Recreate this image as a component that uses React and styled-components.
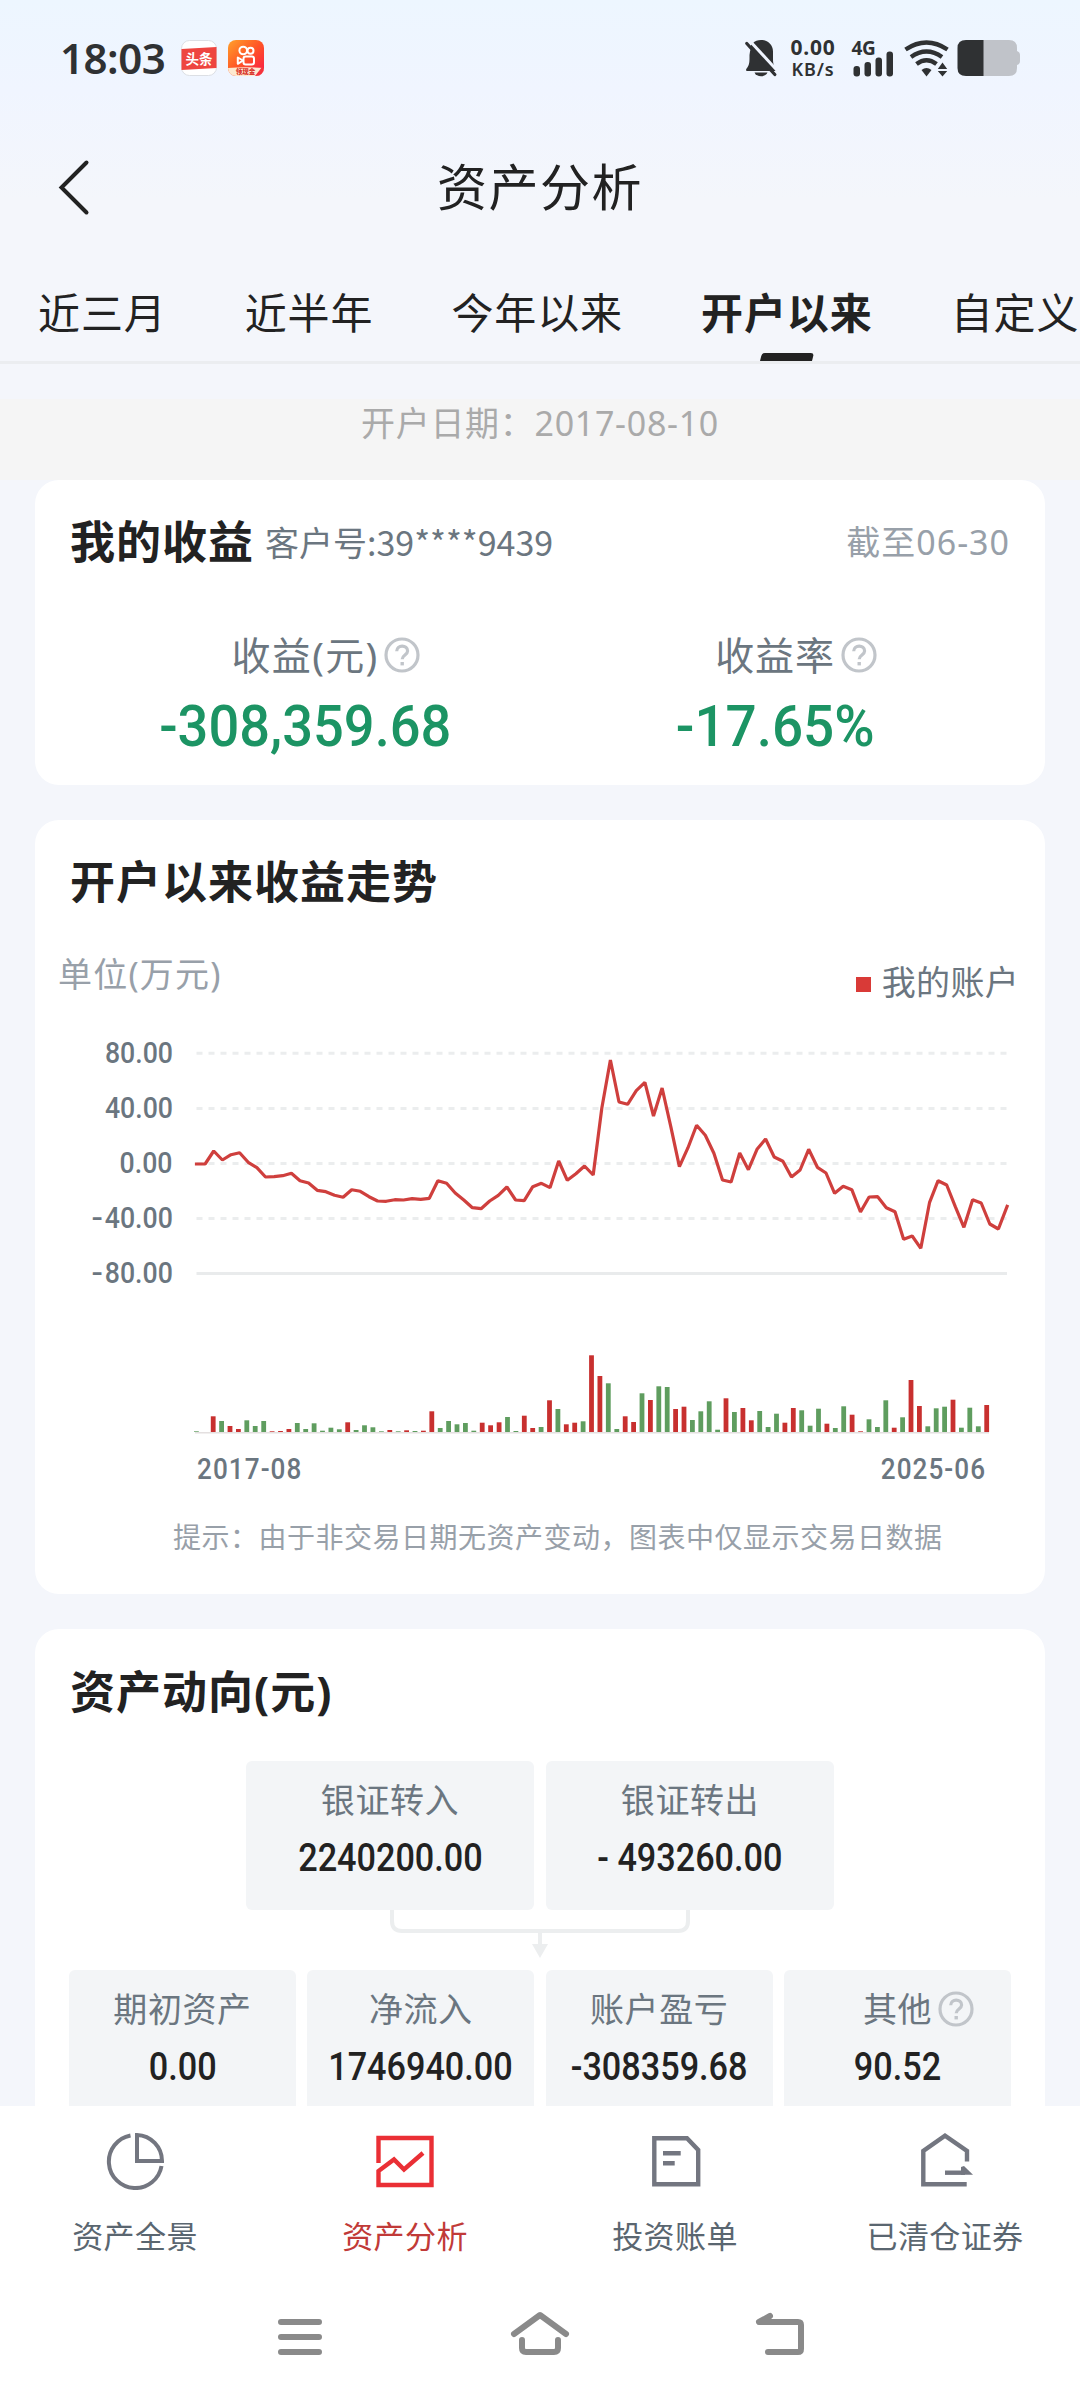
import React from 'react';
import styled, { createGlobalStyle } from 'styled-components';

const GlobalStyle = createGlobalStyle`
  * {
    box-sizing: border-box;
  }
  body {
    margin: 0;
    background: #f4f6fb;
    font-family: 'Noto Sans', 'Noto Sans CJK SC', sans-serif;
    color: #222;
  }
`;

const Screen = styled.div`
  width: 1080px;
  height: 2400px;
  display: flex;
  flex-direction: column;
  overflow: hidden;
  background: #f4f6fb linear-gradient(#edf6ff 0, #f0f5ff 90px, #f4f6fb 200px) no-repeat;
`;

/* ---- status bar ---- */

const StatusBar = styled.div`
  height: 116px;
  flex: none;
  display: flex;
  align-items: center;
  padding: 0 59px 0 60px;
  color: #2f3133;
`;

const Time = styled.div`
  width: 121px;
  font-size: 42px;
  font-weight: 600;
  line-height: 114px;
  letter-spacing: -0.5px;
`;

const AppIcons = styled.div`
  display: flex;
  gap: 11px;
  flex: 1;
`;

const Speed = styled.div`
  width: 48px;
  margin: 0 14px 0 12px;
  padding-bottom: 1px;
  display: flex;
  flex-direction: column;
  align-items: center;
  font-weight: 700;
  font-size: 21px;
  letter-spacing: 0.8px;
  line-height: 23px;
  white-space: nowrap;
`;

const SpeedUnit = styled.span`
  font-size: 18px;
  font-weight: 600;
  line-height: 21px;
`;

/* ---- header ---- */

const Header = styled.div`
  height: 142px;
  flex: none;
  display: grid;
  grid-template-columns: 200px 1fr 200px;
  align-items: center;
`;

const BackButton = styled.div`
  padding-left: 55px;
  display: flex;
`;

const PageTitle = styled.div`
  text-align: center;
  font-size: 50px;
  letter-spacing: 1.5px;
  line-height: 60px;
`;

const Tabs = styled.div`
  height: 106px;
  flex: none;
  display: flex;
  gap: 78px;
  padding: 0 0 0 38px;
  border-bottom: 3px solid #ebedf0;
  overflow: hidden;
`;

const Tab = styled.div`
  flex: none;
  display: flex;
  flex-direction: column;
  justify-content: space-between;
  align-items: center;
  padding-top: 25px;
  font-size: 42px;
  letter-spacing: 0.9px;
  line-height: 60px;
  font-weight: ${props => (props.$active ? 700 : 400)};
`;

const Indicator = styled.div`
  width: 52px;
  height: 8px;
  border-radius: 3px 3px 0 0;
  background: #222;
  transform: skewX(-14deg);
`;

const OpenDate = styled.div`
  height: 81px;
  margin-top: 35px;
  flex: none;
  background: #f5f5f5;
  color: #aaa;
  text-align: center;
  font-size: 34px;
  letter-spacing: 0.7px;
  line-height: 48px;
`;

/* ---- cards ---- */

const Content = styled.div`
  flex: 1;
  min-height: 0;
  overflow: hidden;
  display: flex;
  flex-direction: column;
  gap: 35px;
  padding: 0 35px;
`;

const Card = styled.section`
  flex: none;
  height: ${props => props.$h}px;
  border-radius: 24px;
  background: #fff;
`;

const CardHead = styled.div`
  height: ${props => props.$h || 124}px;
  padding: 0 35px;
  display: flex;
  align-items: center;
`;

const CardTitle = styled.h2`
  margin: 0;
  font-size: 45px;
  font-weight: 700;
  letter-spacing: 1px;
  line-height: 60px;
`;

const Account = styled.span`
  margin-left: 11px;
  flex: 1;
  font-family: 'Noto Sans CJK SC', sans-serif;
  font-size: 34px;
  line-height: 50px;
  color: #6b7680;
`;

const Until = styled.span`
  padding-bottom: 3px;
  font-size: 34px;
  letter-spacing: 1px;
  color: #98a0a9;
`;

const Stats = styled.div`
  display: grid;
  grid-template-columns: 1fr 1fr;
  padding: 20px 35px 0;
`;

const Stat = styled.div`
  display: flex;
  flex-direction: column;
  align-items: center;
`;

const Label = styled.div`
  position: relative;
  font-size: ${props => props.$size || 34}px;
  letter-spacing: ${props => props.$ls || 0.6}px;
  line-height: ${props => props.$lh || 52}px;
  color: #6b7680;
  white-space: nowrap;
`;

const HelpWrap = styled.span`
  position: absolute;
  left: 100%;
  top: 50%;
  margin-left: 6px;
  transform: translateY(-50%);
  display: flex;
`;

const Num = styled.span`
  display: inline-block;
  font-family: Roboto, sans-serif;
  font-weight: 500;
  white-space: nowrap;
  transform: scaleX(${props => props.$sx || 0.9});
`;

const Minus = styled.span`
  display: inline-block;
  margin-right: 2px;
  transform: scaleX(1.25);
  transform-origin: right;
`;

const BigNum = styled(Num)`
  font-size: 58px;
  line-height: 82px;
  color: #1c9464;
`;

/* ---- trend chart ---- */

const ChartHead = styled.div`
  display: flex;
  justify-content: space-between;
  height: 76px;
  padding: 0 26px 0 23px;
  font-size: 34px;
  line-height: 61px;
`;

const Unit = styled.span`
  letter-spacing: 1.2px;
  color: #98a0a9;
`;

const Legend = styled.span`
  display: flex;
  align-items: center;
  gap: 11px;
  height: 62px;
  margin-top: 7px;
  letter-spacing: 0.3px;
  color: #6b7680;
`;

const LegendMark = styled.i`
  width: 15px;
  height: 15px;
  margin-top: 4px;
  background: #d93a37;
`;

const ChartRow = styled.div`
  display: flex;
  height: 430px;
`;

const YAxis = styled.div`
  width: 138px;
  padding-top: 6px;
  display: flex;
  flex-direction: column;
  align-items: flex-end;
`;

const YTick = styled(Num)`
  font-size: 29px;
  line-height: 55.1px;
  color: #6b7680;
  transform-origin: right;
`;

const Plot = styled.svg`
  display: block;
  margin-left: 19px;
`;

const XAxis = styled.div`
  display: flex;
  justify-content: space-between;
  height: 38px;
  padding: 0 59px 0 162px;
`;

const XTick = styled(Num)`
  font-size: 29px;
  letter-spacing: 1.2px;
  line-height: 38px;
  color: #6b7680;
  transform-origin: ${props => props.$origin};
`;

const Hint = styled.p`
  margin: 19px 0 0 138px;
  font-size: 28px;
  letter-spacing: 0.5px;
  line-height: 60px;
  color: #98a0a9;
  white-space: nowrap;
`;

/* ---- asset flow ---- */

const FlowTop = styled.div`
  display: flex;
  justify-content: center;
  gap: 12px;
  padding-top: 6px;
`;

const FlowBottom = styled.div`
  display: grid;
  grid-template-columns: repeat(4, 227px);
  justify-content: space-between;
  padding: 0 34px;
`;

const FlowBox = styled.div`
  width: ${props => props.$w}px;
  height: 149px;
  border-radius: 6px;
  background: #f3f5f7;
  padding-top: 13px;
  display: flex;
  flex-direction: column;
  align-items: center;
`;

const FlowNum = styled(Num)`
  font-size: 38px;
  line-height: 65px;
`;

const Connector = styled.svg`
  display: block;
  margin: 0 auto;
`;

/* ---- bottom bars ---- */

const BottomNav = styled.nav`
  flex: none;
  height: 164px;
  display: grid;
  grid-template-columns: repeat(4, 1fr);
  background: #fff;
`;

const NavItem = styled.div`
  display: flex;
  flex-direction: column;
  align-items: center;
  padding-top: 24px;
  font-size: 31px;
  letter-spacing: 0.4px;
  line-height: 46px;
  color: ${props => (props.$active ? '#c13a38' : '#5a6670')};

  svg {
    margin-bottom: 23px;
  }
`;

const SystemNav = styled.div`
  flex: none;
  height: 130px;
  display: grid;
  grid-template-columns: repeat(3, 240px);
  justify-content: center;
  justify-items: center;
  padding-top: 32px;
  background: #fff;
`;

const ToutiaoIcon = () => (
  <svg width="36" height="36" viewBox="0 0 36 36">
    <rect x="0.5" y="0.5" width="35" height="35" rx="8" fill="#fff" stroke="#dcdfe4" />
    <path d="M0.5 9 L35.5 7 V28 L0.5 30 Z" fill="#ee4540" />
    <text x="18" y="23.5" fontSize="13.5" fontWeight="700" fill="#fff" textAnchor="middle">
      头条
    </text>
  </svg>
);

const KuaishouIcon = () => (
  <svg width="36" height="36" viewBox="0 0 36 36">
    <defs>
      <linearGradient id="ks" x1="0" y1="0" x2="1" y2="1">
        <stop offset="0" stopColor="#ffa12b" />
        <stop offset="0.5" stopColor="#ff5426" />
        <stop offset="1" stopColor="#f8184a" />
      </linearGradient>
      <clipPath id="ksClip">
        <rect width="36" height="36" rx="8" />
      </clipPath>
    </defs>
    <g clipPath="url(#ksClip)">
      <rect width="36" height="36" fill="url(#ks)" />
      <g fill="none" stroke="#fff" strokeWidth="2">
        <circle cx="15.2" cy="10.5" r="3.8" />
        <circle cx="22.5" cy="10.8" r="3" />
        <rect x="15.5" y="16.5" width="10.5" height="8" rx="2.2" />
        <path d="M15 20.5 L9.8 17.5 V23.8 Z" strokeLinejoin="round" />
      </g>
      <path d="M0 28 Q17 26.5 36 28 V36 H0 Z" fill="#fde9d0" />
      <path d="M27 36 L34 27 L36 28 V36 Z" fill="#f4323c" />
      <text x="17.5" y="34.2" fontSize="6.5" fontWeight="900" fill="#d8332a" textAnchor="middle">
        领现金
      </text>
    </g>
  </svg>
);

const MuteIcon = () => (
  <svg width="32" height="38" viewBox="0 0 32 38">
    <path
      d="M16 1 C22.5 1 28 5.5 28 12.5 V20 C28 25 29 27 30.5 29.5 C31.3 31.2 31 32 29.5 32 H2.5 C1 32 0.6 31 1.6 29.5 C4 26.5 4.5 24 4.5 19 V12.5 C4.5 5.5 9.5 1 16 1 Z"
      fill="#2f3133"
    />
    <path d="M9.5 33.5 H22.5 C20.5 38.5 11.5 38.5 9.5 33.5 Z" fill="#2f3133" />
    <path d="M4.5 1.5 L33.5 33" stroke="#f0f5ff" strokeWidth="3" />
    <path d="M0 0 H4 L2.5 4 L6 9 L4 16 L0 8 Z" fill="#f0f5ff" />
    <path d="M1.8 4.5 L29.8 35.5" stroke="#2f3133" strokeWidth="3.2" strokeLinecap="round" />
  </svg>
);

const SignalIcon = () => (
  <svg width="44" height="50" viewBox="0 -6 44 50">
    <text x="0.5" y="15.5" fontSize="19" fontWeight="700" fill="#2f3133" letterSpacing="-0.4">
      4G
    </text>
    <g fill="#2f3133">
      <rect x="2.5" y="27" width="6.5" height="10.5" rx="3" />
      <rect x="13.5" y="23" width="6.5" height="14.5" rx="3" />
      <rect x="24.5" y="18.5" width="6.5" height="19" rx="3" />
      <rect x="35.5" y="12.5" width="6.5" height="25" rx="3" />
    </g>
  </svg>
);

const WifiIcon = () => (
  <svg width="46" height="38" viewBox="0 0 46 38">
    <g fill="none" stroke="#2f3133" strokeWidth="4.4">
      <path d="M1.5 10.5 Q22.5 -3.5 43.5 10.5" />
      <path d="M7 18 Q22.5 7 38 18" />
      <path d="M12.5 25 Q22.5 17.5 32.5 25" />
    </g>
    <path d="M17.5 31 Q22.5 27 27.5 31 L22.5 37.5 Z" fill="#2f3133" />
    <path d="M38.5 23.5 L43.2 30 H33.8 Z M38.5 37.5 L43.2 32 H33.8 Z" fill="#2f3133" />
  </svg>
);

const BatteryIcon = () => (
  <svg width="64" height="38" viewBox="0 0 64 38">
    <path d="M9 1 H52 Q60 1 60 9 V12 Q63 13 63 16 V22 Q63 25 60 26 V29 Q60 37 52 37 H9 Z" fill="#c0c3c9" />
    <path d="M26.5 1 H9 Q0.5 1 0.5 9 V29 Q0.5 37 9 37 H26.5 Z" fill="#2f3133" />
  </svg>
);

const HelpIcon = () => (
  <svg width="36" height="36" viewBox="0 0 36 36" fill="none" stroke="#c1c5ca" strokeWidth="3.2">
    <circle cx="18" cy="18" r="16" />
    <path d="M12.7 14.3 C12.7 7.4 23.6 7.4 23.6 14 C23.6 18 18.2 18 18.2 22.3" />
    <path d="M18.2 25 V28.4" strokeWidth="3.4" />
  </svg>
);

const PieIcon = () => (
  <svg width="60" height="60" viewBox="0 0 60 60" fill="none" stroke="#737680" strokeWidth="4">
    <path d="M25.5 5.5 A26.5 26.5 0 1 0 56.5 36" />
    <path d="M32 5 V31 H57 A26 26 0 0 0 32 5 Z" />
  </svg>
);

const TrendIcon = () => (
  <svg width="60" height="60" viewBox="0 0 60 60" fill="none" stroke="#ea2f35" strokeWidth="4.4">
    <path d="M3.5 33 V8 H56.5 V55 H3.5 V41 L19 29.5 L29 39.5 L48 23" />
  </svg>
);

const BillIcon = () => (
  <svg width="60" height="60" viewBox="0 0 60 60" fill="none" stroke="#737680" strokeWidth="4.4">
    <path d="M9.3 8.3 H42 L53.2 20 V54.3 H9.3 Z" />
    <path d="M18 23.3 H35.7 M18 33.3 H29.7" />
  </svg>
);

const ClearedIcon = () => (
  <svg width="60" height="60" viewBox="0 0 60 60" fill="none" stroke="#737680" strokeWidth="4.4">
    <path d="M51.7 54.3 H8.3 V21 L30 5.7 L52 21 V31.5" />
    <path d="M30 42.7 H50" />
    <path d="M46 37 L49 36 L58 44.8 H46 Z" fill="#737680" stroke="none" />
  </svg>
);

// monthly cumulative profit, as plot heights (3 units per pixel)
const PROFIT_Y = [
  432, 432, 393, 420, 404, 398, 427, 443, 471, 470, 467, 460, 482, 489, 511, 515, 526, 532, 509, 514,
  530, 543, 544, 539, 540, 536, 538, 535, 482, 490, 519, 540, 563, 566, 543, 526, 501, 540, 542, 500,
  490, 503, 423, 481, 461, 438, 465, 265, 120, 246, 253, 212, 187, 288, 204, 320, 440, 383, 316, 346,
  400, 480, 486, 399, 449, 388, 357, 411, 424, 471, 450, 388, 442, 459, 520, 499, 509, 576, 531, 530,
  563, 575, 658, 648, 685, 548, 482, 495, 560, 622, 539, 549, 612, 627, 559,
];

// monthly change: positive is a gain (red), negative a loss (green)
const CHANGES = [
  -2, 0, 47, -33, 18, 9, -35, -18, -33, 2, 3, 9, -27, -9, -26, -4, -13, -8, 29, -6,
  -20, -14, -2, 6, -2, 5, -3, 4, 62, -12, -33, -23, -27, -4, 28, 20, 29, -45, -3, 49,
  12, -15, 95, -69, 23, 28, -32, 230, 168, -146, -9, 47, 30, -116, 96, -137, -135, 69, 76, -36,
  -62, -92, -7, 101, -60, 72, 35, -63, -15, -55, 28, 72, -65, -19, -70, 25, -12, -77, 52, 2,
  -38, -15, -95, 13, -44, 156, 78, -17, -71, -76, 97, -13, -73, -17, 81,
];

const GRID = [33.3, 88.4, 143.5, 198.5];

const linePoints = PROFIT_Y.map((y, i) => `${(4.5 + i * 8.623).toFixed(1)},${(y / 3).toFixed(1)}`).join(' ');

const TrendChart = () => (
  <Plot width="830" height="430" viewBox="0 0 830 430">
    {GRID.map(y => (
      <line key={y} x1="4.5" x2="815" y1={y} y2={y} stroke="#ebedee" strokeWidth="3" strokeDasharray="6 6" />
    ))}
    <line x1="4.5" x2="815" y1="253.5" y2="253.5" stroke="#e9ebec" strokeWidth="3" />
    <polyline
      points={linePoints}
      fill="none"
      stroke="#cf3f3d"
      strokeWidth="3.2"
      strokeLinejoin="bevel"
      strokeLinecap="square"
    />
    <line x1="3" x2="797" y1="412.8" y2="412.8" stroke="#e4e0e0" strokeWidth="1.5" />
    {CHANGES.map((v, i) => {
      const h = Math.abs(v) / 3;
      return (
        <rect
          key={i}
          x={(4.4 + i * 8.407 - 2.4).toFixed(1)}
          y={(412 - h).toFixed(1)}
          width="4.8"
          height={h.toFixed(1)}
          fill={v > 0 ? '#c8302f' : '#5f9d5f'}
        />
      );
    })}
  </Plot>
);

const TABS = ['近三月', '近半年', '今年以来', '开户以来', '自定义'];

const NAV = [
  { label: '资产全景', icon: <PieIcon /> },
  { label: '资产分析', icon: <TrendIcon />, active: true },
  { label: '投资账单', icon: <BillIcon /> },
  { label: '已清仓证券', icon: <ClearedIcon /> },
];

const Help = () => (
  <HelpWrap>
    <HelpIcon />
  </HelpWrap>
);

const App = () => (
  <>
    <GlobalStyle />
    <Screen>
      <StatusBar>
        <Time>18:03</Time>
        <AppIcons>
          <ToutiaoIcon />
          <KuaishouIcon />
        </AppIcons>
        <MuteIcon />
        <Speed>
          0.00
          <SpeedUnit>KB/s</SpeedUnit>
        </Speed>
        <SignalIcon />
        <span style={{ width: 9 }} />
        <WifiIcon />
        <span style={{ width: 7 }} />
        <BatteryIcon />
      </StatusBar>

      <Header>
        <BackButton>
          <svg width="40" height="60" viewBox="0 0 40 60" fill="none" stroke="#222" strokeWidth="4">
            <path d="M31.5 5.5 L6.5 30.5 L31.5 55.5" strokeLinecap="round" />
          </svg>
        </BackButton>
        <PageTitle>资产分析</PageTitle>
      </Header>

      <Tabs>
        {TABS.map(tab => (
          <Tab key={tab} $active={tab === '开户以来'}>
            {tab}
            {tab === '开户以来' && <Indicator />}
          </Tab>
        ))}
      </Tabs>

      <OpenDate>开户日期：2017-08-10</OpenDate>

      <Content>
        <Card $h={305}>
          <CardHead>
            <CardTitle>我的收益</CardTitle>
            <Account>客户号:39****9439</Account>
            <Until>截至06-30</Until>
          </CardHead>
          <Stats>
            <Stat>
              <Label $size={39} $lh={61} $ls={1.3}>
                收益(元)
                <Help />
              </Label>
              <BigNum $sx={0.935}>-308,359.68</BigNum>
            </Stat>
            <Stat>
              <Label $size={39} $lh={61} $ls={0.9}>
                收益率
                <Help />
              </Label>
              <BigNum $sx={0.945}>-17.65%</BigNum>
            </Stat>
          </Stats>
        </Card>

        <Card $h={774}>
          <CardHead>
            <CardTitle>开户以来收益走势</CardTitle>
          </CardHead>
          <ChartHead>
            <Unit>单位(万元)</Unit>
            <Legend>
              <LegendMark />
              我的账户
            </Legend>
          </ChartHead>
          <ChartRow>
            <YAxis>
              <YTick $sx={0.92}>80.00</YTick>
              <YTick $sx={0.92}>40.00</YTick>
              <YTick $sx={0.92}>0.00</YTick>
              <YTick $sx={0.92}>
                <Minus>-</Minus>40.00
              </YTick>
              <YTick $sx={0.92}>
                <Minus>-</Minus>80.00
              </YTick>
            </YAxis>
            <TrendChart />
          </ChartRow>
          <XAxis>
            <XTick $origin="left">2017-08</XTick>
            <XTick $origin="right">2025-06</XTick>
          </XAxis>
          <Hint>提示：由于非交易日期无资产变动，图表中仅显示交易日数据</Hint>
        </Card>

        <Card $h={520}>
          <CardHead $h={126}>
            <CardTitle>资产动向(元)</CardTitle>
          </CardHead>
          <FlowTop>
            <FlowBox $w={288}>
              <Label>银证转入</Label>
              <FlowNum>2240200.00</FlowNum>
            </FlowBox>
            <FlowBox $w={288}>
              <Label>银证转出</Label>
              <FlowNum>- 493260.00</FlowNum>
            </FlowBox>
          </FlowTop>
          <Connector width="302" height="60" viewBox="0 0 302 60" fill="none" stroke="#eceeef" strokeWidth="4">
            <path d="M3 0 V11 Q3 21 13 21 H289 Q299 21 299 11 V0" />
            <path d="M151 21 V36" />
            <path d="M143 34 H159 L151 48 Z" fill="#eceeef" stroke="none" />
          </Connector>
          <FlowBottom>
            <FlowBox $w={227}>
              <Label>期初资产</Label>
              <FlowNum>0.00</FlowNum>
            </FlowBox>
            <FlowBox $w={227}>
              <Label>净流入</Label>
              <FlowNum>1746940.00</FlowNum>
            </FlowBox>
            <FlowBox $w={227}>
              <Label>账户盈亏</Label>
              <FlowNum>-308359.68</FlowNum>
            </FlowBox>
            <FlowBox $w={227}>
              <Label>
                其他
                <Help />
              </Label>
              <FlowNum>90.52</FlowNum>
            </FlowBox>
          </FlowBottom>
        </Card>
      </Content>

      <BottomNav>
        {NAV.map(item => (
          <NavItem key={item.label} $active={item.active}>
            {item.icon}
            {item.label}
          </NavItem>
        ))}
      </BottomNav>

      <SystemNav>
        <svg width="60" height="60" viewBox="0 0 60 60" stroke="#8a8a8a" strokeWidth="6" strokeLinecap="round">
          <path d="M11 20 H49 M11 35 H49 M11 50 H49" />
        </svg>
        <svg
          width="60"
          height="60"
          viewBox="0 0 60 60"
          fill="none"
          stroke="#8a8a8a"
          strokeWidth="6"
          strokeLinecap="round"
          strokeLinejoin="round"
        >
          <path d="M4 32 L30 13 L56 32" />
          <path d="M12 38 V46 Q12 50 16 50 H44 Q48 50 48 46 V38" />
        </svg>
        <svg
          width="60"
          height="60"
          viewBox="0 0 60 60"
          fill="none"
          stroke="#8a8a8a"
          strokeWidth="6"
          strokeLinecap="round"
          strokeLinejoin="round"
        >
          <path d="M20 14 L9 20 H48 Q51 20 51 23 V47 Q51 50 48 50 H18" />
        </svg>
      </SystemNav>
    </Screen>
  </>
);

export default App;
